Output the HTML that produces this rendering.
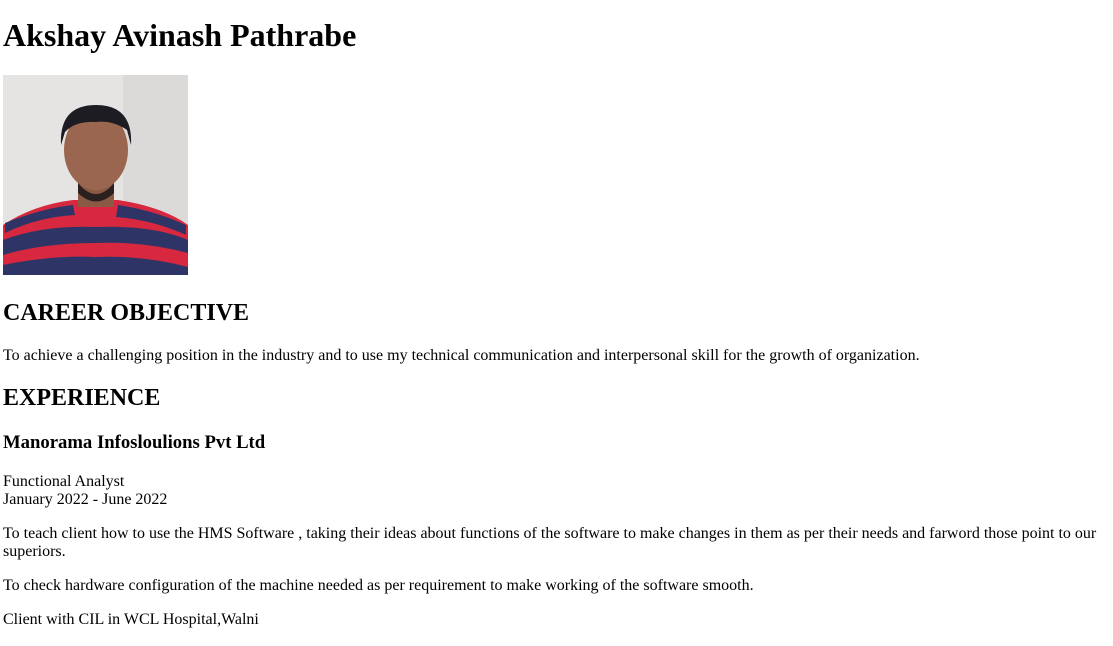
<!DOCTYPE html>
<html><head><meta charset="utf-8"><style>
body{margin:0 3px;font-family:"Liberation Serif",serif;font-size:16px;color:#000;background:#fff}
h1{font-size:32px;margin:17px 0 21px}
h2{font-size:24px;margin:20px 0}
h2.first{margin-top:25px}
h3{font-size:18.7px;margin:19px 0}
p{margin:16px 0}
svg{display:block}
</style></head><body>
<h1>Akshay Avinash Pathrabe</h1>
<svg width="185" height="200" viewBox="0 0 185 200">
<rect width="185" height="200" fill="#e6e4e2"/>
<rect x="120" width="65" height="200" fill="#dcdad8"/>
<path d="M0 150 Q30 130 70 125 L115 125 Q160 132 185 150 L185 200 L0 200Z" fill="#d8283f"/>
<path d="M0 165 Q40 150 92 152 Q150 150 185 165 L185 178 Q140 166 92 168 Q40 168 0 180Z" fill="#2e3566"/>
<path d="M0 190 Q50 180 92 182 Q140 180 185 192 L185 200 L0 200Z" fill="#2e3566"/>
<path d="M2 148 Q40 133 70 130 L72 140 Q35 142 2 158Z" fill="#2e3566"/>
<path d="M115 130 Q150 135 183 150 L183 160 Q150 145 113 142Z" fill="#2e3566"/>
<rect x="75" y="100" width="36" height="32" fill="#8a5a44"/>
<ellipse cx="93" cy="75" rx="32" ry="40" fill="#9a6650"/>
<path d="M58 70 Q56 30 93 30 Q130 30 128 70 L124 55 Q110 45 93 47 Q72 46 62 57Z" fill="#1c1c22"/>
<path d="M75 108 Q93 130 111 108 L111 118 Q93 135 75 118Z" fill="#2a2020"/>
</svg>
<h2 class="first">CAREER OBJECTIVE</h2>
<p>To achieve a challenging position in the industry and to use my technical communication and interpersonal skill for the growth of organization.</p>
<h2>EXPERIENCE</h2>
<h3>Manorama Infosloulions Pvt Ltd</h3>
<p>Functional Analyst<br>January 2022 - June 2022</p>
<p>To teach client how to use the HMS Software , taking their ideas about functions of the software to make changes in them as per their needs and farword those point to our superiors.</p>
<p>To check hardware configuration of the machine needed as per requirement to make working of the software smooth.</p>
<p>Client with CIL in WCL Hospital,Walni</p>
</body></html>
